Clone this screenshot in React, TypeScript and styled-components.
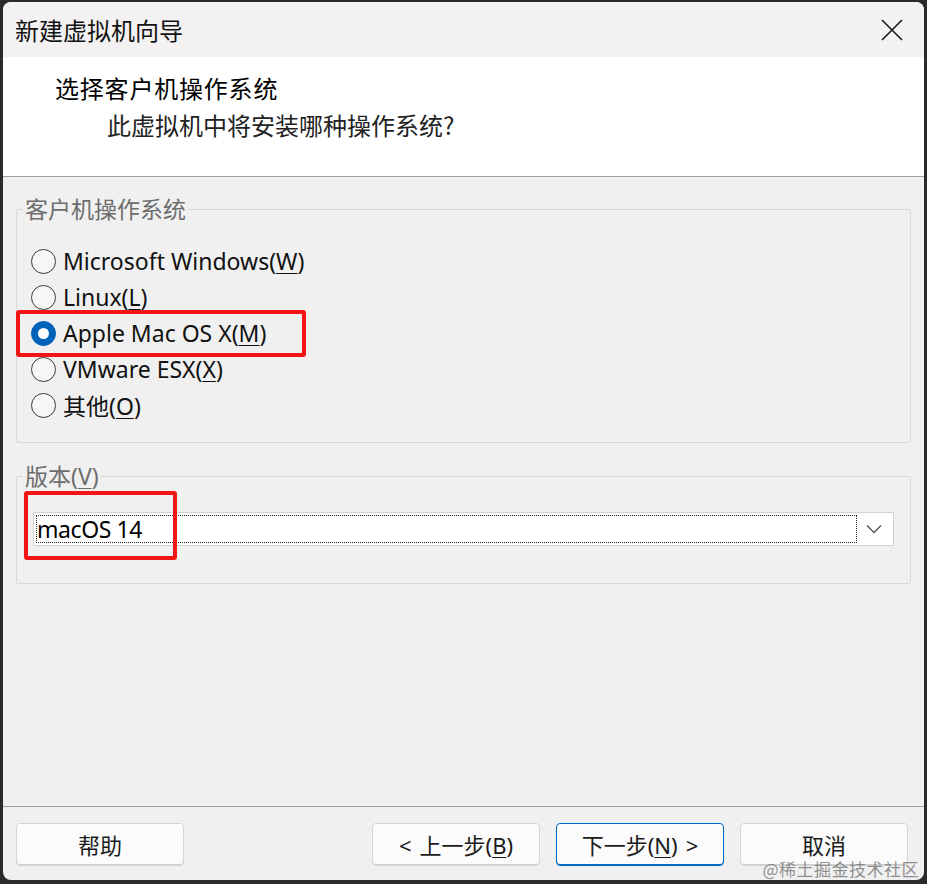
import React from "react";
import styled, { createGlobalStyle } from "styled-components";

const Global = createGlobalStyle`
  html, body { margin: 0; padding: 0; background: #2a2a2a; }
  body { font-family: "Noto Sans", "Noto Sans CJK SC", sans-serif; }
  * { box-sizing: border-box; }
`;

const Desk = styled.div`
  width: 927px;
  height: 884px;
  padding: 2px 3px 4px 3px;
  background: #2a2a2a;
`;

const Window = styled.div`
  position: relative;
  width: 921px;
  height: 878px;
  border-radius: 8px;
  overflow: hidden;
  background: #f0f0f0;
  display: flex;
  flex-direction: column;
  font-family: "Noto Sans", "Noto Sans CJK SC", sans-serif;
  color: #1a1a1a;
`;

const TitleBar = styled.div`
  height: 55px;
  flex: none;
  background: #f3f1f1;
  display: flex;
  align-items: center;
  justify-content: space-between;
  padding: 0 20px 0 12px;
`;

const TitleText = styled.div`
  font-family: "Noto Sans CJK SC", sans-serif;
  font-size: 24px;
  color: #111;
`;

const CloseIcon = styled.svg`
  width: 24px;
  height: 24px;
  display: block;
`;

const Header = styled.div`
  height: 120px;
  flex: none;
  background: #ffffff;
  border-bottom: 1px solid #a0a0a0;
  padding: 16px 0 0 52px;
`;

const HeaderTitle = styled.div`
  font-family: "Noto Sans CJK SC", sans-serif;
  font-size: 24px;
  letter-spacing: 0.8px;
  font-weight: 400;
  line-height: 30px;
  color: #000;
`;

const HeaderSub = styled.div`
  font-family: "Noto Sans CJK SC", sans-serif;
  font-size: 24px;
  line-height: 30px;
  margin: 7px 0 0 52px;
  color: #222;
`;

const Body = styled.div`
  flex: 1;
  padding: 18px 13px 0 13px;
  display: flex;
  flex-direction: column;
  gap: 19px;
`;

const Group = styled.fieldset<{ $pt: number; $pb: number }>`
  margin: 0;
  border: 1px solid #d9d9d9;
  border-radius: 2px;
  padding: ${(p) => p.$pt}px 16px ${(p) => p.$pb}px 14px;
  min-width: 0;
`;

const Legend = styled.legend`
  font-family: "Noto Sans", "Noto Sans CJK SC", sans-serif;
  font-size: 23px;
  line-height: 28px;
  color: #6d6d6d;
  padding: 0 2px;
  margin-left: -8px;
`;

const RadioRow = styled.label`
  position: relative;
  height: 36px;
  display: flex;
  align-items: center;
  gap: 7px;
  font-size: 23px;
  color: #111;
`;

const RadioCircle = styled.span<{ $checked?: boolean }>`
  width: 25px;
  height: 25px;
  flex: none;
  border-radius: 50%;
  border: 1.2px solid ${(p) => (p.$checked ? "#0062b8" : "#3a3a3a")};
  background: ${(p) => (p.$checked ? "#0062b8" : "#f6f6f6")};
  display: flex;
  align-items: center;
  justify-content: center;
  &::after {
    content: "";
    display: ${(p) => (p.$checked ? "block" : "none")};
    width: 11px;
    height: 11px;
    border-radius: 50%;
    background: #fff;
  }
`;

const Mn = styled.span`
  text-decoration: underline;
  text-underline-offset: 3px;
  text-decoration-thickness: 1px;
`;

const Highlight = styled.span<{ $l: number; $t: number; $w: number; $h: number }>`
  position: absolute;
  left: ${(p) => p.$l}px;
  top: ${(p) => p.$t}px;
  width: ${(p) => p.$w}px;
  height: ${(p) => p.$h}px;
  border: 4px solid #f41414;
  border-radius: 3px;
  pointer-events: none;
`;

const Combo = styled.div`
  position: relative;
  height: 34px;
  margin-left: 2px;
  background: #ffffff;
  border: 1px solid #d3d3d3;
  display: flex;
  align-items: center;
  padding: 2px;
`;

const ComboField = styled.div`
  flex: 1;
  height: 100%;
  border: 1px dotted #222;
  display: flex;
  align-items: center;
  padding-left: 0;
  font-family: "Noto Sans", sans-serif;
  font-size: 23px;
  letter-spacing: -0.4px;
  color: #000;
`;

const ComboArrow = styled.div`
  width: 34px;
  display: flex;
  align-items: center;
  justify-content: center;
`;

const Footer = styled.div`
  flex: none;
  height: 74px;
  border-top: 1px solid #a0a0a0;
  padding: 16px 13px 0 13px;
  display: flex;
  align-items: flex-start;
`;

const Spacer = styled.div`
  flex: 1;
`;

const Buttons = styled.div`
  display: flex;
  gap: 16px;
  padding-right: 3px;
`;

const Button = styled.button<{ $primary?: boolean }>`
  width: 168px;
  height: 43px;
  background: #fbfbfb;
  border: 1px solid ${(p) => (p.$primary ? "#0067c0" : "#d4d4d4")};
  box-shadow: ${(p) => (p.$primary ? "inset 0 -1px 0 #0067c0" : "inset 0 -1px 0 #cfcfcf")};
  border-radius: 4px;
  font-family: "Noto Sans", "Noto Sans CJK SC", sans-serif;
  font-size: 22px;
  line-height: 22px;
  color: #1a1a1a;
  padding: 0;
  display: flex;
  align-items: center;
  justify-content: center;
  gap: 8px;
`;

const Watermark = styled.div`
  position: absolute;
  right: 5px;
  bottom: 3px;
  font-family: "Noto Sans CJK SC", sans-serif;
  font-size: 17px;
  line-height: 17px;
  color: rgba(110, 110, 110, 0.75);
  letter-spacing: 0.5px;
`;

const options: { label: string; key: string; checked?: boolean }[] = [
  { label: "Microsoft Windows(", key: "W" },
  { label: "Linux(", key: "L" },
  { label: "Apple Mac OS X(", key: "M", checked: true },
  { label: "VMware ESX(", key: "X" },
  { label: "其他(", key: "O" },
];

export default function App() {
  return (
    <>
      <Global />
      <Desk>
        <Window>
          <TitleBar>
            <TitleText>新建虚拟机向导</TitleText>
            <CloseIcon viewBox="0 0 24 24">
              <path d="M2 2 L22 22 M22 2 L2 22" stroke="#1a1a1a" strokeWidth="1.6" fill="none" />
            </CloseIcon>
          </TitleBar>
          <Header>
            <HeaderTitle>选择客户机操作系统</HeaderTitle>
            <HeaderSub>此虚拟机中将安装哪种操作系统?</HeaderSub>
          </Header>
          <Body>
            <Group $pt={20} $pb={19}>
              <Legend>客户机操作系统</Legend>
              {options.map((o) => (
                <RadioRow key={o.key}>
                  <RadioCircle $checked={o.checked} />
                  <span>
                    {o.label}
                    <Mn>{o.key}</Mn>)
                  </span>
                  {o.checked && <Highlight $l={-15} $t={-5} $w={290} $h={47} />}
                </RadioRow>
              ))}
            </Group>
            <Group $pt={22} $pb={37}>
              <Legend>
                版本(<Mn>V</Mn>)
              </Legend>
              <Combo>
                <ComboField>macOS 14</ComboField>
                <ComboArrow>
                  <svg width="16" height="10" viewBox="0 0 16 10">
                    <path d="M1 1.5 L8 8.5 L15 1.5" stroke="#555" strokeWidth="1.3" fill="none" />
                  </svg>
                </ComboArrow>
                <Highlight $l={-10} $t={-22} $w={153} $h={69} />
              </Combo>
            </Group>
          </Body>
          <Footer>
            <Button>帮助</Button>
            <Spacer />
            <Buttons>
              <Button>
                <span>&lt;</span>
                <span>
                  上一步(<Mn>B</Mn>)
                </span>
              </Button>
              <Button $primary>
                <span>
                  下一步(<Mn>N</Mn>)
                </span>
                <span>&gt;</span>
              </Button>
              <Button>取消</Button>
            </Buttons>
          </Footer>
          <Watermark>@稀土掘金技术社区</Watermark>
        </Window>
      </Desk>
    </>
  );
}
